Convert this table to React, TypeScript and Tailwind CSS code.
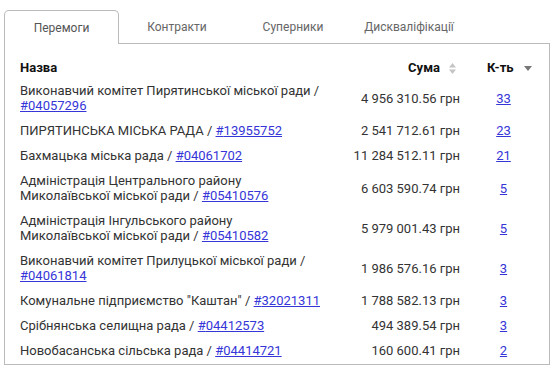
import React from "react";

type Row = { name: string; code: string; sum: string; count: string };

const rows: Row[] = [
  { name: "Виконавчий комітет Пирятинської міської ради", code: "04057296", sum: "4 956 310.56 грн", count: "33" },
  { name: "ПИРЯТИНСЬКА МІСЬКА РАДА", code: "13955752", sum: "2 541 712.61 грн", count: "23" },
  { name: "Бахмацька міська рада", code: "04061702", sum: "11 284 512.11 грн", count: "21" },
  { name: "Адміністрація Центрального району Миколаївської міської ради", code: "05410576", sum: "6 603 590.74 грн", count: "5" },
  { name: "Адміністрація Інгульського району Миколаївської міської ради", code: "05410582", sum: "5 979 001.43 грн", count: "5" },
  { name: "Виконавчий комітет Прилуцької міської ради", code: "04061814", sum: "1 986 576.16 грн", count: "3" },
  { name: "Комунальне підприємство \"Каштан\"", code: "32021311", sum: "1 788 582.13 грн", count: "3" },
  { name: "Срібнянська селищна рада", code: "04412573", sum: "494 389.54 грн", count: "3" },
  { name: "Новобасанська сільська рада", code: "04414721", sum: "160 600.41 грн", count: "2" },
];

const tabs = ["Перемоги", "Контракти", "Суперники", "Дискваліфікації"];

export default function App() {
  return (
    <div className="w-[559px] h-[379px] bg-white pt-[10px] pl-[4px]" style={{ fontFamily: "Roboto, 'Liberation Sans', sans-serif" }}>
      <div className="flex w-[546px]">
        {tabs.map((t, i) =>
          i === 0 ? (
            <div key={t} className="w-[115px] h-[34px] flex items-center justify-center text-[12px] text-[#555] border border-b-0 border-[#bbb] rounded-t-[5px] bg-white relative z-10 -mb-px">
              {t}
            </div>
          ) : (
            <div key={t} className="w-[116px] h-[33px] flex items-center justify-center text-[12px] text-[#666]">
              {t}
            </div>
          )
        )}
      </div>
      <div className="w-[546px] h-[322px] border border-[#bbb] pl-[15px] pr-[4px] pt-[14px] text-[13px] text-[#333]">
        <table className="w-[527px] table-fixed border-collapse">
          <thead>
            <tr className="h-[20px]">
              <th className="w-[302px] text-left font-bold text-[#111] p-0 align-middle">Назва</th>
              <th className="w-[138px] text-right font-bold text-[#111] p-0 pr-[4px] align-middle">
                <span className="inline-flex items-center gap-[9px]">
                  Сума
                  <svg width="7" height="11" viewBox="0 0 7 11">
                    <path d="M3.5 0 L7 4.5 L0 4.5 Z" fill="#c4c4c4" />
                    <path d="M3.5 11 L7 6.5 L0 6.5 Z" fill="#c4c4c4" />
                  </svg>
                </span>
              </th>
              <th className="w-[87px] text-left font-bold text-[#111] p-0 pl-[27px] align-middle">
                <span className="inline-flex items-center gap-[10px]">
                  К-ть
                  <svg width="8" height="5" viewBox="0 0 8 5">
                    <path d="M0 0 L8 0 L4 5 Z" fill="#777" />
                  </svg>
                </span>
              </th>
            </tr>
          </thead>
          <tbody>
            {rows.map((r) => (
              <tr key={r.code}>
                <td className="py-[5px] px-0 leading-[15px] align-middle">
                  {r.name} / <a href="#" className="text-[#3535d8] underline">#{r.code}</a>
                </td>
                <td className="py-[5px] px-0 leading-[15px] text-right align-middle">{r.sum}</td>
                <td className="py-[5px] px-0 leading-[15px] text-center align-middle">
                  <a href="#" className="text-[#3535d8] underline">{r.count}</a>
                </td>
              </tr>
            ))}
          </tbody>
        </table>
      </div>
    </div>
  );
}
